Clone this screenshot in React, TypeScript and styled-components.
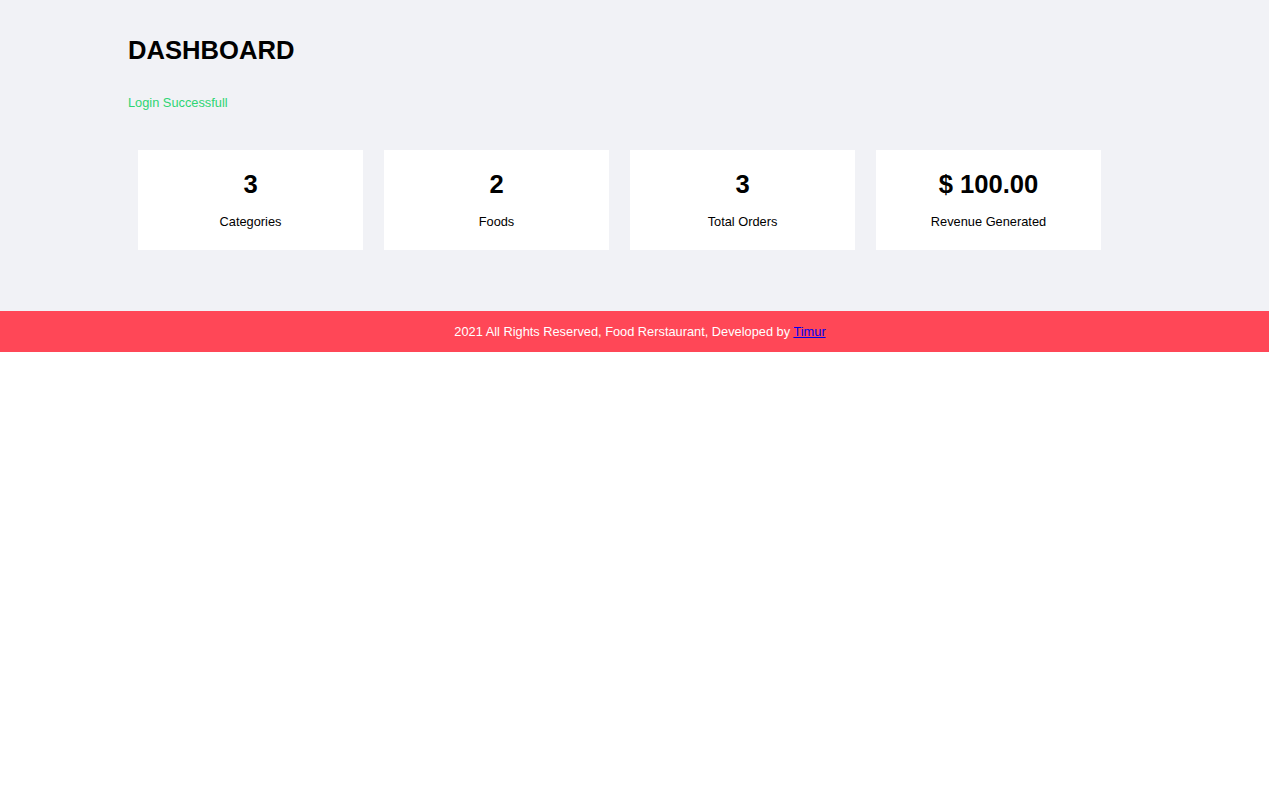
import React from "react";
import styled, { createGlobalStyle } from "styled-components";

const GlobalStyle = createGlobalStyle`
  html, body {
    margin: 0;
    padding: 0;
    background: #ffffff;
    font-family: "Liberation Sans", Arial, sans-serif;
  }
  * { box-sizing: border-box; }
`;

const Main = styled.main`
  background: #f1f2f6;
  padding: 35px 0 61px 128px;
`;

const Title = styled.h1`
  margin: 0;
  font-size: 25.6px;
  line-height: 30px;
  font-weight: bold;
  color: #000;
`;

const Success = styled.div`
  margin-top: 30px;
  font-size: 12.8px;
  line-height: 15px;
  color: #2ed573;
`;

const Cards = styled.div`
  display: flex;
  gap: 21px;
  width: 963px;
  margin: 40px 0 0 10px;
`;

const Card = styled.div`
  flex: 1;
  height: 100px;
  background: #ffffff;
  padding-top: 19px;
  text-align: center;
`;

const Value = styled.div`
  font-size: 25.6px;
  line-height: 30px;
  font-weight: bold;
  color: #000;
`;

const Label = styled.div`
  margin-top: 15px;
  font-size: 12.8px;
  line-height: 15px;
  color: #000;
`;

const Footer = styled.footer`
  background: #ff4757;
  color: #ffffff;
  text-align: center;
  font-size: 12.8px;
  line-height: 15px;
  padding: 13px 0 13px 11px;
`;

const Link = styled.a`
  color: #0000ee;
  text-decoration: underline;
`;

const stats = [
  { value: "3", label: "Categories" },
  { value: "2", label: "Foods" },
  { value: "3", label: "Total Orders" },
  { value: "$ 100.00", label: "Revenue Generated" },
];

export default function App() {
  return (
    <>
      <GlobalStyle />
      <Main>
        <Title>DASHBOARD</Title>
        <Success>Login Successfull</Success>
        <Cards>
          {stats.map((s) => (
            <Card key={s.label}>
              <Value>{s.value}</Value>
              <Label>{s.label}</Label>
            </Card>
          ))}
        </Cards>
      </Main>
      <Footer>
        2021 All Rights Reserved, Food Rerstaurant, Developed by <Link href="#">Timur</Link>
      </Footer>
    </>
  );
}
